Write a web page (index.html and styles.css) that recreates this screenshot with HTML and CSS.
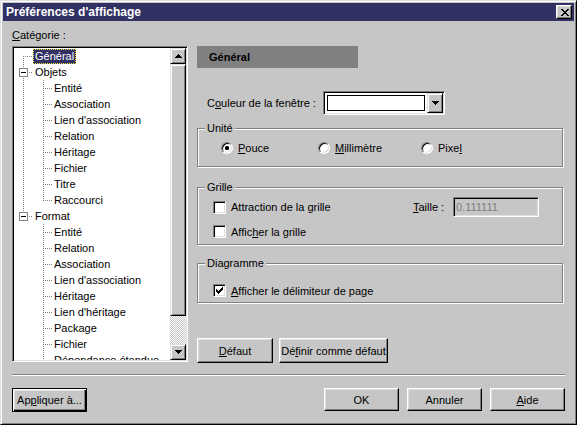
FILE: index.html
```html
<!DOCTYPE html>
<html lang="fr">
<head>
<meta charset="utf-8">
<title>Préférences d'affichage</title>
<link rel="stylesheet" href="styles.css">
</head>
<body>
<div class="window">
  <div class="titlebar">
    <span class="title">Préférences d'affichage</span>
    <div class="close">
      <svg width="8" height="7" viewBox="0 0 8 7" shape-rendering="crispEdges"><path d="M0 0h2v1h-2z M6 0h2v1h-2z M1 1h2v1h-2z M5 1h2v1h-2z M2 2h4v1h-4z M3 3h2v1h-2z M2 4h4v1h-4z M1 5h2v1h-2z M5 5h2v1h-2z M0 6h2v1h-2z M6 6h2v1h-2z" fill="#000"/></svg>
    </div>
  </div>

  <div class="main">
    <div class="left">
      <div class="cat-label"><u>C</u>atégorie :</div>
      <div class="treebox">
        <div class="tree">
          <div class="row"><span class="cell lv1 first"></span><span class="lbl sel">Général</span></div>
          <div class="row"><span class="cell lv1 tee"><span class="exp"><span class="minus"></span></span></span><span class="lbl">Objets</span></div>
          <div class="row"><span class="cell lv1 pass"></span><span class="cell lv2 tee"></span><span class="lbl">Entité</span></div>
          <div class="row"><span class="cell lv1 pass"></span><span class="cell lv2 tee"></span><span class="lbl">Association</span></div>
          <div class="row"><span class="cell lv1 pass"></span><span class="cell lv2 tee"></span><span class="lbl">Lien d'association</span></div>
          <div class="row"><span class="cell lv1 pass"></span><span class="cell lv2 tee"></span><span class="lbl">Relation</span></div>
          <div class="row"><span class="cell lv1 pass"></span><span class="cell lv2 tee"></span><span class="lbl">Héritage</span></div>
          <div class="row"><span class="cell lv1 pass"></span><span class="cell lv2 tee"></span><span class="lbl">Fichier</span></div>
          <div class="row"><span class="cell lv1 pass"></span><span class="cell lv2 tee"></span><span class="lbl">Titre</span></div>
          <div class="row"><span class="cell lv1 pass"></span><span class="cell lv2 last"></span><span class="lbl">Raccourci</span></div>
          <div class="row"><span class="cell lv1 last"><span class="exp"><span class="minus"></span></span></span><span class="lbl">Format</span></div>
          <div class="row"><span class="cell lv1"></span><span class="cell lv2 tee"></span><span class="lbl">Entité</span></div>
          <div class="row"><span class="cell lv1"></span><span class="cell lv2 tee"></span><span class="lbl">Relation</span></div>
          <div class="row"><span class="cell lv1"></span><span class="cell lv2 tee"></span><span class="lbl">Association</span></div>
          <div class="row"><span class="cell lv1"></span><span class="cell lv2 tee"></span><span class="lbl">Lien d'association</span></div>
          <div class="row"><span class="cell lv1"></span><span class="cell lv2 tee"></span><span class="lbl">Héritage</span></div>
          <div class="row"><span class="cell lv1"></span><span class="cell lv2 tee"></span><span class="lbl">Lien d'héritage</span></div>
          <div class="row"><span class="cell lv1"></span><span class="cell lv2 tee"></span><span class="lbl">Package</span></div>
          <div class="row"><span class="cell lv1"></span><span class="cell lv2 tee"></span><span class="lbl">Fichier</span></div>
          <div class="row"><span class="cell lv1"></span><span class="cell lv2 tee"></span><span class="lbl">Dépendance étendue</span></div>
        </div>
        <div class="vscroll">
          <div class="sb-btn">
            <svg width="7" height="4" viewBox="0 0 7 4" shape-rendering="crispEdges"><path d="M3 0h1v1h-1z M2 1h3v1h-3z M1 2h5v1h-5z M0 3h7v1h-7z" fill="#000"/></svg>
          </div>
          <div class="sb-thumb"></div>
          <div class="sb-track"></div>
          <div class="sb-btn">
            <svg width="7" height="4" viewBox="0 0 7 4" shape-rendering="crispEdges"><path d="M0 0h7v1h-7z M1 1h5v1h-5z M2 2h3v1h-3z M3 3h1v1h-1z" fill="#000"/></svg>
          </div>
        </div>
      </div>
    </div>

    <div class="right">
      <div class="page-header">Général</div>

      <div class="color-row">
        <span class="color-label">C<u>o</u>uleur de la fenêtre :</span>
        <div class="combo">
          <div class="combo-field"><div class="swatch"></div></div>
          <div class="combo-btn">
            <svg width="7" height="4" viewBox="0 0 7 4" shape-rendering="crispEdges"><path d="M0 0h7v1h-7z M1 1h5v1h-5z M2 2h3v1h-3z M3 3h1v1h-1z" fill="#000"/></svg>
          </div>
        </div>
      </div>

      <div class="group g-unit">
        <span class="group-title">Unité</span>
        <div class="radio-row">
          <div class="opt opt-a"><span class="radio"><span class="dot"></span></span><span><u>P</u>ouce</span></div>
          <div class="opt opt-b"><span class="radio"></span><span><u>M</u>illimètre</span></div>
          <div class="opt"><span class="radio"></span><span>Pixe<u>l</u></span></div>
        </div>
      </div>

      <div class="group g-grid">
        <span class="group-title">Grille</span>
        <div class="grid-row1">
          <div class="chk-item chk-wide"><span class="checkbox"></span><span>Attraction de la grille</span></div>
          <span class="size-label"><u>T</u>aille :</span>
          <div class="textbox">0.111111</div>
        </div>
        <div class="grid-row2">
          <div class="chk-item"><span class="checkbox"></span><span>Affic<u>h</u>er la grille</span></div>
        </div>
      </div>

      <div class="group g-diag">
        <span class="group-title">Diagramme</span>
        <div class="diag-row">
          <div class="chk-item">
            <span class="checkbox">
              <svg width="7" height="7" viewBox="0 0 7 7" shape-rendering="crispEdges"><path d="M6 0h1v1h-1z M5 1h2v1h-2z M0 2h1v1h-1z M4 2h3v1h-3z M0 3h2v1h-2z M3 3h3v1h-3z M0 4h5v1h-5z M1 5h3v1h-3z M2 6h1v1h-1z" fill="#000"/></svg>
            </span>
            <span><u>A</u>fficher le délimiteur de page</span>
          </div>
        </div>
      </div>

      <div class="page-buttons">
        <button class="btn btn-defaut"><u>D</u>éfaut</button>
        <button class="btn btn-definir">Dé<u>f</u>inir comme défaut</button>
      </div>
    </div>
  </div>

  <div class="separator"></div>

  <div class="footer">
    <button class="btn btn-default-frame">Ap<u>p</u>liquer à...</button>
    <div class="footer-right">
      <button class="btn btn-foot">OK</button>
      <button class="btn btn-foot">Annuler</button>
      <button class="btn btn-foot"><u>A</u>ide</button>
    </div>
  </div>
</div>
</body>
</html>
```

FILE: styles.css
```css
* { box-sizing: border-box; }

html, body {
  margin: 0;
  padding: 0;
  background: #c6c6c6;
}

body {
  font-family: "Liberation Sans", Arial, sans-serif;
  font-size: 11px;
  color: #000;
}

u { text-decoration: underline; text-underline-offset: 1px; }

.window {
  width: 577px;
  height: 425px;
  background: #c6c6c6;
  border: 1px solid;
  border-color: #dfdfdf #000 #000 #dfdfdf;
  box-shadow: inset 1px 1px 0 #fff, inset -1px -1px 0 #808080;
  padding: 2px;
  display: flex;
  flex-direction: column;
  overflow: hidden;
}

/* Title bar */
.titlebar {
  height: 18px;
  background: #313163;
  display: flex;
  align-items: center;
  justify-content: space-between;
  padding: 0 2px 0 3px;
  flex: none;
}

.title {
  color: #fff;
  font-weight: bold;
  font-size: 12px;
  line-height: 18px;
  white-space: nowrap;
}

.close {
  width: 16px;
  height: 14px;
  background: #c6c6c6;
  border: 1px solid;
  border-color: #fff #000 #000 #fff;
  box-shadow: inset -1px -1px 0 #808080, inset 1px 1px 0 #dfdfdf;
  display: flex;
  align-items: center;
  justify-content: center;
  padding-left: 1px;
}
.close svg { display: block; }

/* Main area */
.main {
  display: flex;
  padding-left: 9px;
  gap: 9px;
  flex: none;
}

.left {
  width: 176px;
  flex: none;
}

.cat-label {
  margin-top: 8px;
  line-height: 13px;
  height: 13px;
  margin-bottom: 4px;
  white-space: nowrap;
}

.treebox {
  height: 316px;
  border: 1px solid;
  border-color: #808080 #fff #fff #808080;
  box-shadow: inset 1px 1px 0 #000, inset -1px -1px 0 #dfdfdf;
  padding: 1px;
  display: flex;
}

.tree {
  flex: 1;
  background: #fff;
  overflow: hidden;
  --vg: repeating-linear-gradient(to bottom, #808080 0 1px, transparent 1px 2px);
  --hg: repeating-linear-gradient(to right, #808080 0 1px, transparent 1px 2px);
}

.row {
  height: 16px;
  display: flex;
  align-items: center;
  white-space: nowrap;
}

.cell {
  width: 19px;
  height: 16px;
  flex: none;
  position: relative;
  background-repeat: no-repeat;
}
.lv1 { --x: 9px; --w: 10px; }
.lv2 { --x: 10px; --w: 9px; }

.tee {
  background-image: var(--vg), var(--hg);
  background-size: 1px 16px, var(--w) 1px;
  background-position: var(--x) 0, var(--x) 8px;
}
.first {
  background-image: var(--vg), var(--hg);
  background-size: 1px 8px, var(--w) 1px;
  background-position: var(--x) 8px, var(--x) 8px;
}
.last {
  background-image: var(--vg), var(--hg);
  background-size: 1px 9px, var(--w) 1px;
  background-position: var(--x) 0, var(--x) 8px;
}
.pass {
  background-image: var(--vg);
  background-size: 1px 16px;
  background-position: var(--x) 0;
}

.exp {
  position: absolute;
  left: 5px;
  top: 4px;
  width: 9px;
  height: 9px;
  background: #fff;
  border: 1px solid #808080;
  display: flex;
  align-items: center;
  justify-content: center;
}
.minus {
  width: 5px;
  height: 1px;
  background: #000;
}

.lbl {
  display: inline-block;
  line-height: 13px;
  padding: 0 1px;
  border: 1px solid transparent;
}
.lbl.sel {
  background: #313163;
  color: #fff;
  border: 1px dotted #e8e840;
}

.vscroll {
  width: 16px;
  flex: none;
  display: flex;
  flex-direction: column;
}

.sb-btn, .sb-thumb {
  background: #c6c6c6;
  border: 1px solid;
  border-color: #dfdfdf #000 #000 #dfdfdf;
  box-shadow: inset 1px 1px 0 #fff, inset -1px -1px 0 #808080;
}

.sb-btn {
  height: 16px;
  flex: none;
  display: flex;
  align-items: center;
  justify-content: center;
}
.sb-btn svg { display: block; }

.sb-thumb {
  height: 252px;
  flex: none;
}

.sb-track {
  flex: 1;
  background: repeating-conic-gradient(#c6c6c6 0 25%, #fff 0 50%) 0 0 / 2px 2px;
}

/* Right panel */
.right {
  width: 366px;
  flex: none;
  padding-top: 25px;
}

.page-header {
  width: 161px;
  height: 22px;
  background: #808080;
  font-weight: bold;
  line-height: 22px;
  padding-left: 12px;
  color: #000;
}

.color-row {
  margin-top: 23px;
  height: 24px;
  display: flex;
  align-items: center;
  padding-left: 10px;
}

.color-label {
  width: 116px;
  flex: none;
  white-space: nowrap;
}

.combo {
  width: 122px;
  height: 24px;
  border: 1px solid;
  border-color: #808080 #fff #fff #808080;
  box-shadow: inset 1px 1px 0 #000, inset -1px -1px 0 #dfdfdf;
  padding: 1px;
  display: flex;
}

.combo-field {
  flex: 1;
  background: #fff;
  padding: 2px;
}

.swatch {
  height: 100%;
  border: 1px solid #000;
  background: #fff;
}

.combo-btn {
  width: 16px;
  flex: none;
  background: #c6c6c6;
  border: 1px solid;
  border-color: #dfdfdf #000 #000 #dfdfdf;
  box-shadow: inset 1px 1px 0 #fff, inset -1px -1px 0 #808080;
  display: flex;
  align-items: center;
  justify-content: center;
}

/* Groups */
.group {
  position: relative;
  border: 1px solid #808080;
  box-shadow: inset 1px 1px 0 #fff, 1px 1px 0 #fff;
}

.group-title {
  position: absolute;
  top: -7px;
  left: 7px;
  padding: 0 2px;
  line-height: 13px;
  background: #c6c6c6;
  white-space: nowrap;
}

.g-unit {
  margin-top: 13px;
  height: 39px;
  padding: 12px 0 0 23px;
}

.radio-row {
  display: flex;
  align-items: center;
  height: 14px;
}

.opt {
  display: flex;
  align-items: center;
  gap: 5px;
  white-space: nowrap;
}
.opt-a { width: 97px; }
.opt-b { width: 103px; }

.radio {
  width: 12px;
  height: 12px;
  flex: none;
  border-radius: 50%;
  background: #fff;
  border: 1px solid;
  border-color: #808080 #fff #fff #808080;
  box-shadow: inset 1px 1px 0 #000, inset -1px -1px 0 #dfdfdf;
  display: flex;
  align-items: center;
  justify-content: center;
}

.dot {
  width: 4px;
  height: 4px;
  border-radius: 1.5px;
  background: #000;
}

.g-grid {
  margin-top: 20px;
  height: 58px;
  padding: 9px 0 0 15px;
}

.grid-row1 {
  display: flex;
  align-items: center;
  height: 20px;
}

.grid-row2 {
  display: flex;
  align-items: center;
  height: 13px;
  margin-top: 8px;
}

.chk-item {
  display: flex;
  align-items: center;
  gap: 5px;
  white-space: nowrap;
}
.chk-wide { width: 200px; }

.checkbox {
  width: 13px;
  height: 13px;
  flex: none;
  background: #fff;
  border: 1px solid;
  border-color: #808080 #fff #fff #808080;
  box-shadow: inset 1px 1px 0 #000, inset -1px -1px 0 #dfdfdf;
  display: flex;
  align-items: center;
  justify-content: center;
}
.checkbox svg { display: block; }

.size-label {
  width: 40px;
  flex: none;
  white-space: nowrap;
}

.textbox {
  width: 86px;
  height: 20px;
  background: #c6c6c6;
  color: #808080;
  border: 1px solid;
  border-color: #808080 #fff #fff #808080;
  box-shadow: inset 1px 1px 0 #000, inset -1px -1px 0 #dfdfdf;
  line-height: 18px;
  padding-left: 2px;
}

.g-diag {
  margin-top: 18px;
  height: 40px;
  padding: 20px 0 0 15px;
}

.diag-row {
  display: flex;
  align-items: center;
  height: 13px;
}

/* Buttons */
.btn {
  font-family: "Liberation Sans", Arial, sans-serif;
  font-size: 11px;
  color: #000;
  background: #c6c6c6;
  border: 1px solid;
  border-color: #fff #000 #000 #fff;
  box-shadow: inset -1px -1px 0 #808080, inset 1px 1px 0 #dfdfdf;
  padding: 0;
  margin: 0;
  white-space: nowrap;
}

.page-buttons {
  margin-top: 35px;
  display: flex;
  gap: 6px;
}

.btn-defaut { width: 76px; height: 25px; }
.btn-definir { width: 109px; height: 25px; }

.separator {
  margin: 11px 9px 0 9px;
  height: 2px;
  border-top: 1px solid #808080;
  border-bottom: 1px solid #fff;
  flex: none;
}

.footer {
  margin-top: 12px;
  padding: 0 9px;
  display: flex;
  justify-content: space-between;
  align-items: flex-start;
}

.footer-right {
  display: flex;
  gap: 8px;
}

.btn-foot {
  width: 75px;
  height: 23px;
}

.btn-default-frame {
  width: 75px;
  height: 24px;
  border: 1px solid #000;
  box-shadow: inset 1px 1px 0 #fff, inset -1px -1px 0 #000, inset -2px -2px 0 #808080, inset 2px 2px 0 #dfdfdf;
}
```
